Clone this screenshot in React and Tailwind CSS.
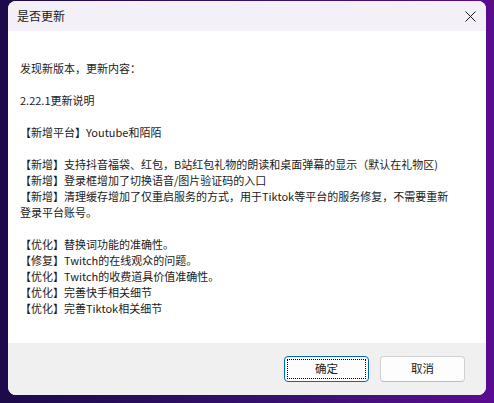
import React from "react";

const lines = [
  "发现新版本，更新内容：",
  "",
  "2.22.1更新说明",
  "",
  "【新增平台】Youtube和陌陌",
  "",
  "【新增】支持抖音福袋、红包，B站红包礼物的朗读和桌面弹幕的显示（默认在礼物区)",
  "【新增】登录框增加了切换语音/图片验证码的入口",
  "【新增】清理缓存增加了仅重启服务的方式，用于Tiktok等平台的服务修复，不需要重新",
  "登录平台账号。",
  "",
  "【优化】替换词功能的准确性。",
  "【修复】Twitch的在线观众的问题。",
  "【优化】Twitch的收费道具价值准确性。",
  "【优化】完善快手相关细节",
  "【优化】完善Tiktok相关细节",
];

export default function App() {
  const font = { fontFamily: '"Noto Sans CJK SC", "Noto Sans", sans-serif' };
  return (
    <div
      className="w-[494px] h-[403px] bg-gradient-to-r from-[#1c0a4a] via-[#33106a] to-[#5a0b90] pl-[8px] pt-[1px]"
      style={font}
    >
      <div className="w-[478px] h-[394px] rounded-[8px] overflow-hidden flex flex-col bg-white">
        <div className="h-[30px] bg-[#f3f0f8] flex items-center justify-between pl-[9px] pr-[10px]">
          <span className="text-[12px] text-[#1a1a1a] leading-none">是否更新</span>
          <svg width="11" height="11" viewBox="0 0 11 11">
            <path d="M0.5 0.5 L10.5 10.5 M10.5 0.5 L0.5 10.5" stroke="#1a1a1a" strokeWidth="1" fill="none" />
          </svg>
        </div>
        <div className="flex-1 bg-white pt-[29px] pl-[12px]">
          {lines.map((l, i) => (
            <div
              key={i}
              className="h-[16px] leading-[16px] text-[11px] text-[#1a1a1a] whitespace-pre"
            >
              {l}
            </div>
          ))}
        </div>
        <div className="h-[52px] bg-[#f0f0f0] flex items-center justify-end pr-[21px] gap-[11px]">
          <button className="w-[85px] h-[26px] rounded-[4px] border border-[#0067c0] bg-[#fdfdfd] p-[2px] flex">
            <span className="flex-1 border border-dotted border-black flex items-center justify-center text-[11.5px] text-[#1a1a1a]">
              确定
            </span>
          </button>
          <button className="w-[85px] h-[26px] rounded-[4px] border border-[#d0d0d0] border-b-[#bdbdbd] bg-[#fdfdfd] flex items-center justify-center text-[11.5px] text-[#1a1a1a]">
            取消
          </button>
        </div>
      </div>
    </div>
  );
}
